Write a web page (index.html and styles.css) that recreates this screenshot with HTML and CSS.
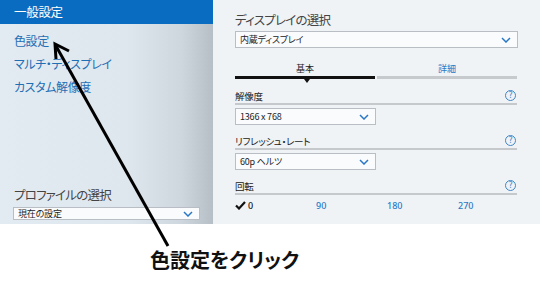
FILE: index.html
```html
<!DOCTYPE html>
<html lang="ja">
<head>
<meta charset="utf-8">
<link rel="stylesheet" href="styles.css">
</head>
<body>
<div class="page">
  <div class="shot">
    <div class="left">
      <div class="head">一般設定</div>
      <nav class="menu">
        <div class="item">色設定</div>
        <div class="item">マルチ・ディスプレイ</div>
        <div class="item">カスタム解像度</div>
      </nav>
      <div class="profile">
        <div class="title">プロファイルの選択</div>
        <div class="select wide">
          <span>現在の設定</span>
          <svg class="chev" width="10" height="6" viewBox="0 0 10 6"><polyline points="1,1 5,5 9,1" fill="none" stroke="#2a78c4" stroke-width="1.5"/></svg>
        </div>
      </div>
    </div>
    <div class="right">
      <div class="title">ディスプレイの選択</div>
      <div class="select full">
        <span>内蔵ディスプレイ</span>
        <svg class="chev" width="10" height="6" viewBox="0 0 10 6"><polyline points="1,1 5,5 9,1" fill="none" stroke="#2a78c4" stroke-width="1.5"/></svg>
      </div>
      <div class="tabs">
        <div class="tab active">基本</div>
        <div class="tab">詳細</div>
      </div>
      <div class="sect first">
        <div class="label"><span>解像度</span><span class="q">?</span></div>
        <div class="select small">
          <span>1366 x 768</span>
          <svg class="chev" width="10" height="6" viewBox="0 0 10 6"><polyline points="1,1 5,5 9,1" fill="none" stroke="#2a78c4" stroke-width="1.5"/></svg>
        </div>
      </div>
      <div class="sect">
        <div class="label"><span>リフレッシュ・レート</span><span class="q">?</span></div>
        <div class="select small">
          <span>60p ヘルツ</span>
          <svg class="chev" width="10" height="6" viewBox="0 0 10 6"><polyline points="1,1 5,5 9,1" fill="none" stroke="#2a78c4" stroke-width="1.5"/></svg>
        </div>
      </div>
      <div class="sect">
        <div class="label"><span>回転</span><span class="q">?</span></div>
        <div class="rot">
          <span class="r sel"><svg width="11" height="9" viewBox="0 0 11 9"><polyline points="1,4.5 4,7.5 10,1" fill="none" stroke="#111" stroke-width="2.2"/></svg>0</span>
          <span class="r">90</span>
          <span class="r">180</span>
          <span class="r">270</span>
        </div>
      </div>
    </div>
  </div>
  <div class="caption">色設定をクリック</div>
  <svg class="arrow" width="540" height="293" viewBox="0 0 540 293">
    <line x1="56" y1="46" x2="168" y2="246" stroke="#000" stroke-width="3"/>
    <polyline points="69,51 55,44 56,59" fill="none" stroke="#000" stroke-width="3" stroke-linejoin="miter"/>
  </svg>
</div>
</body>
</html>
```

FILE: styles.css
```css
* { box-sizing: border-box; }
html, body { margin: 0; padding: 0; background: #fff; }
body {
  font-family: "Noto Sans CJK JP", "Noto Sans", sans-serif;
  font-feature-settings: "palt";
  width: 540px;
  height: 293px;
  overflow: hidden;
}
.page { position: relative; width: 540px; height: 293px; }
.shot { display: flex; height: 224px; }
.left {
  width: 213px;
  display: flex;
  flex-direction: column;
  background: linear-gradient(to right, #e3ebf2 0%, #dfe7ee 60%, #cfd7de 85%, #b6bec6 100%);
}
.head {
  height: 24px;
  background: #0a6cc0;
  color: #fff;
  font-size: 12.5px;
  line-height: 24px;
  padding-left: 14px;
  letter-spacing: -0.3px;
}
.menu { display: flex; flex-direction: column; padding-left: 14px; padding-top: 8px; gap: 5px; }
.item { color: #1f6fb5; font-size: 12px; line-height: 18px; letter-spacing: -0.4px; }
.profile { margin-top: auto; padding: 0 13px 4px 13px; }
.profile .title { font-size: 12.5px; color: #444; line-height: 18px; padding-left: 1px; margin-bottom: 3px; font-weight: 400; letter-spacing: -0.8px; }
.select {
  display: flex;
  align-items: center;
  justify-content: space-between;
  background: #fafbfc;
  border: 1px solid #b8bec4;
  font-size: 9px;
  color: #222;
  padding: 0 6px 0 4px;
  letter-spacing: -0.2px;
}
.select.wide { height: 13px; width: 187px; }
.right {
  flex: 1;
  background: #eff3f6;
  padding: 11px 22px 0 22px;
}
.right .title { font-size: 12.5px; color: #444; line-height: 18px; font-weight: 400; letter-spacing: -0.8px; }
.select.full { height: 17px; margin-top: 2px; width: 283px; }
.tabs { display: flex; margin-top: 15px; width: 282px; gap: 2px; }
.tab {
  flex: 1;
  text-align: center;
  font-size: 9px;
  color: #2a7ac6;
  line-height: 12px;
  padding-bottom: 1px;
  border-bottom: 3px solid #c6cacd;
  position: relative;
}
.tab.active { color: #222; border-bottom-color: #111; }
.tab.active::after {
  content: "";
  position: absolute;
  left: 69px;
  bottom: -7px;
  border-left: 3px solid transparent;
  border-right: 3px solid transparent;
  border-top: 4px solid #111;
}
.sect { margin-top: 10px; }
.sect.first { margin-top: 11px; }
.label {
  display: flex;
  justify-content: space-between;
  align-items: flex-end;
  font-size: 9.5px;
  color: #222;
  line-height: 12px;
  border-bottom: 2px solid #c5c9cc;
  padding-bottom: 1px;
  width: 282px;
  letter-spacing: -0.3px;
}
.q {
  width: 11px; height: 11px;
  border: 1px solid #3f86c8;
  border-radius: 50%;
  color: #3f86c8;
  font-size: 8px;
  line-height: 9px;
  text-align: center;
  margin-right: 1px;
  margin-bottom: 1px;
  font-family: "DejaVu Sans", sans-serif;
  letter-spacing: 0;
}
.select.small { width: 141px; height: 17px; margin-top: 3px; font-size: 9px; }
.rot { display: flex; margin-top: 4px; font-size: 9px; color: #2a7ac6; font-family: "Noto Sans", sans-serif; font-weight: 500; }
.r { width: 71px; padding-left: 11px; }
.r.sel { color: #111; padding-left: 0; display: flex; align-items: center; gap: 2px; width: 70px; }
.caption {
  padding-left: 150px;
  padding-top: 22px;
  font-size: 20px;
  font-weight: bold;
  color: #111;
  line-height: 28px;
}
.arrow { position: absolute; left: 0; top: 0; pointer-events: none; }
```
